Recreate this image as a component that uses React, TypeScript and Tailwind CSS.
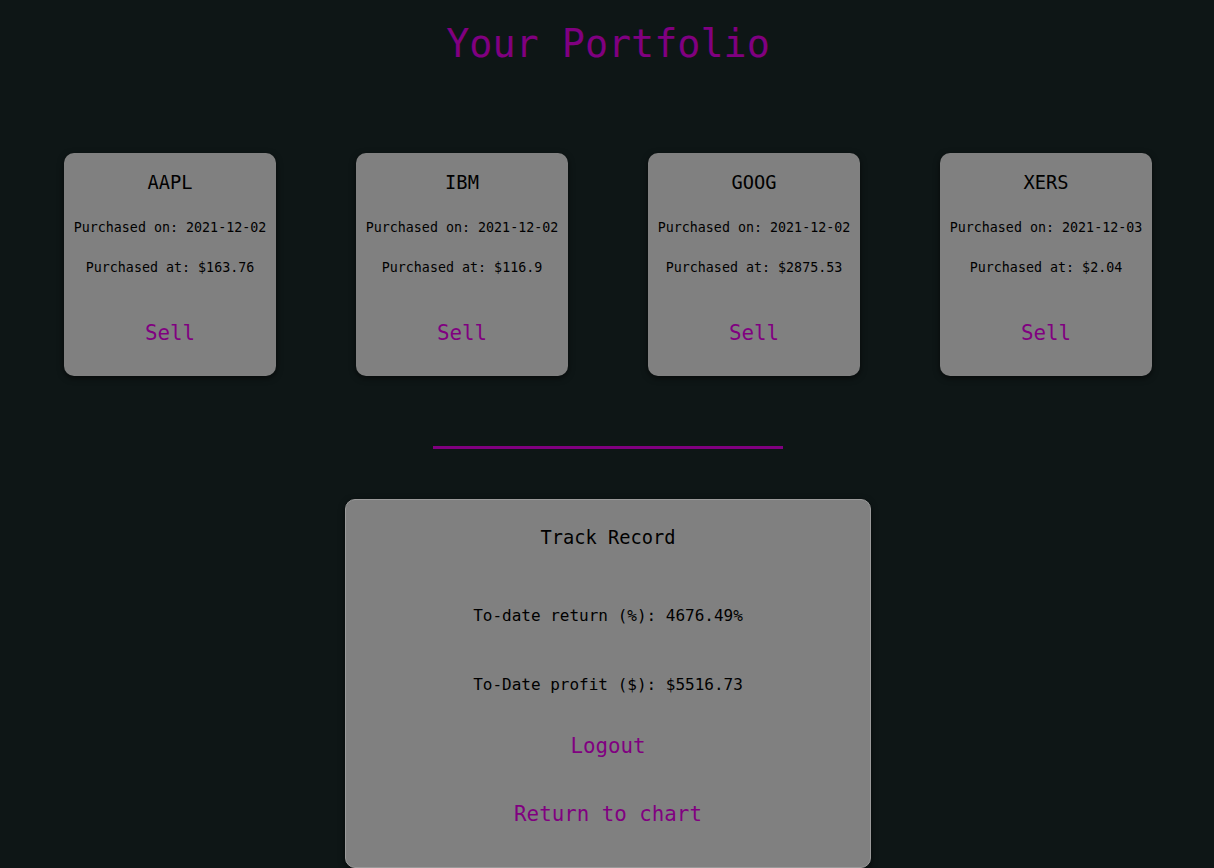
const stocks = [
  { symbol: 'AAPL', date: '2021-12-02', price: '163.76' },
  { symbol: 'IBM', date: '2021-12-02', price: '116.9' },
  { symbol: 'GOOG', date: '2021-12-02', price: '2875.53' },
  { symbol: 'XERS', date: '2021-12-03', price: '2.04' },
];

function StockCard({ symbol, date, price }: { symbol: string; date: string; price: string }) {
  return (
    <div className="w-[212px] h-[223px] rounded-[10px] bg-[#808080] shadow-[0_2px_6px_rgba(0,0,0,0.6)] flex flex-col items-center pt-[18px] text-black">
      <h3 className="text-[18.72px] leading-[24px]">{symbol}</h3>
      <p className="mt-[25px] text-[13.33px] leading-[16px]">Purchased on: {date}</p>
      <p className="mt-[24px] text-[13.33px] leading-[16px]">Purchased at: ${price}</p>
      <button className="mt-[45px] text-[20.8px] leading-[24px] text-[#800080]">Sell</button>
    </div>
  );
}

export default function App() {
  return (
    <div className="min-h-[868px] bg-[#0e1616] font-['DejaVu_Sans_Mono',monospace] flex flex-col items-center pl-[2px]">
      <h1 className="mt-[21px] text-[38.4px] leading-[46px] text-[#800080]">Your Portfolio</h1>

      <div className="mt-[86px] flex gap-[80px] justify-center">
        {stocks.map((s) => (
          <StockCard key={s.symbol} {...s} />
        ))}
      </div>

      <div className="mt-[70px] w-[350px] h-[3px] bg-[#800080]" />

      <div className="mt-[50px] w-[526px] rounded-[10px] border border-[#9a9a9a] bg-[#808080] shadow-[0_2px_6px_rgba(0,0,0,0.6)] flex flex-col items-center pt-[26px] pb-[40px] text-black">
        <h3 className="text-[18.72px] leading-[24px]">Track Record</h3>
        <p className="mt-[56px] text-[16px] leading-[20px]">To-date return (%): 4676.49%</p>
        <p className="mt-[49px] text-[16px] leading-[20px]">To-Date profit ($): $5516.73</p>
        <button className="mt-[38px] text-[20.8px] leading-[26px] text-[#800080]">Logout</button>
        <button className="mt-[42px] text-[20.8px] leading-[26px] text-[#800080]">Return to chart</button>
      </div>
    </div>
  );
}
